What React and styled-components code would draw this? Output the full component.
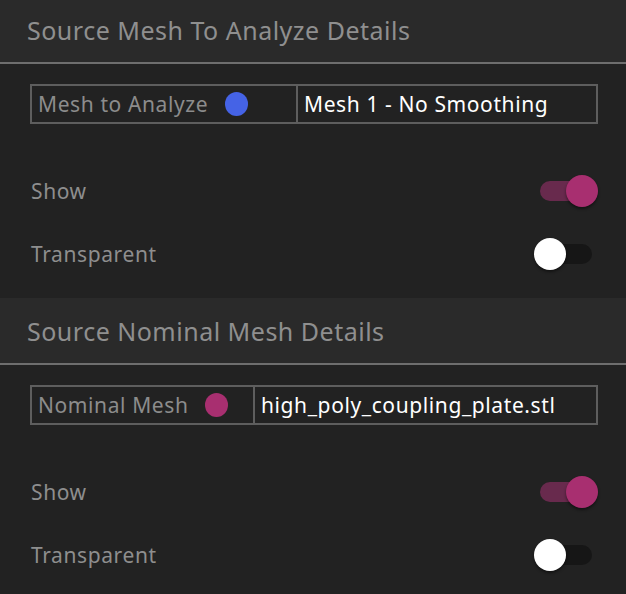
import React from "react";
import styled, { createGlobalStyle } from "styled-components";

const GlobalStyle = createGlobalStyle`
  html, body {
    margin: 0;
    padding: 0;
    background: #222222;
  }
  body {
    font-family: "Noto Sans", "Open Sans", sans-serif;
    overflow: hidden;
  }
`;

const Panel = styled.div`
  width: 626px;
  margin-top: -3px;
  display: flex;
  flex-direction: column;
`;

const Section = styled.section`
  display: flex;
  flex-direction: column;
`;

const Header = styled.div`
  height: 65px;
  display: flex;
  align-items: center;
  padding: 0 27px;
  background: #2a2a2a;
  border-bottom: 2px solid #6e6e6e;
  color: #8f8f8f;
  font-size: 25px;
  letter-spacing: 0.5px;
`;

const Body = styled.div`
  padding: 20px 28px 13px 30px;
  display: flex;
  flex-direction: column;
`;

const Field = styled.div`
  height: 40px;
  box-sizing: border-box;
  display: grid;
  grid-template-columns: ${(p) => p.$split}px 1fr;
  border: 2px solid #5e5e5e;
  margin-bottom: 35px;
`;

const FieldLabel = styled.div`
  display: flex;
  align-items: center;
  gap: 17px;
  padding-left: 6px;
  border-right: 2px solid #5e5e5e;
  color: #8c8c8c;
  font-size: 21px;
  letter-spacing: 0.6px;
`;

const Dot = styled.span`
  width: 23px;
  height: 24px;
  border-radius: 50%;
  background: ${(p) => p.$color};
`;

const FieldValue = styled.div`
  display: flex;
  align-items: center;
  padding-left: 6px;
  color: #ffffff;
  font-size: 21px;
  letter-spacing: 0.6px;
`;

const Row = styled.div`
  height: 63px;
  display: flex;
  align-items: center;
  justify-content: space-between;
  padding-left: 1px;
  color: #8e8e8e;
  font-size: 21px;
  letter-spacing: 0.6px;
`;

const Switch = styled.div`
  position: relative;
  width: 52px;
  height: 20px;
  margin-right: 6px;
  border-radius: 10px;
  background: ${(p) => (p.$on ? "#682a4d" : "#161616")};
`;

const Knob = styled.span`
  position: absolute;
  top: -6px;
  left: ${(p) => (p.$on ? "26px" : "-6px")};
  width: 32px;
  height: 32px;
  border-radius: 50%;
  background: ${(p) => (p.$on ? "#a82f70" : "#ffffff")};
  box-shadow: 0 2px 3px rgba(0, 0, 0, 0.45);
`;

const Toggle = ({ on }) => (
  <Switch $on={on}>
    <Knob $on={on} />
  </Switch>
);

const MeshSection = ({ title, label, color, value, split }) => (
  <Section>
    <Header>{title}</Header>
    <Body>
      <Field $split={split}>
        <FieldLabel>
          {label}
          <Dot $color={color} />
        </FieldLabel>
        <FieldValue>{value}</FieldValue>
      </Field>
      <Row>
        Show
        <Toggle on />
      </Row>
      <Row>
        Transparent
        <Toggle on={false} />
      </Row>
    </Body>
  </Section>
);

export default function App() {
  return (
    <>
      <GlobalStyle />
      <Panel>
        <MeshSection
          title="Source Mesh To Analyze Details"
          label="Mesh to Analyze"
          color="#4563e6"
          value="Mesh 1 - No Smoothing"
          split={266}
        />
        <MeshSection
          title="Source Nominal Mesh Details"
          label="Nominal Mesh"
          color="#a82f70"
          value="high_poly_coupling_plate.stl"
          split={223}
        />
      </Panel>
    </>
  );
}
